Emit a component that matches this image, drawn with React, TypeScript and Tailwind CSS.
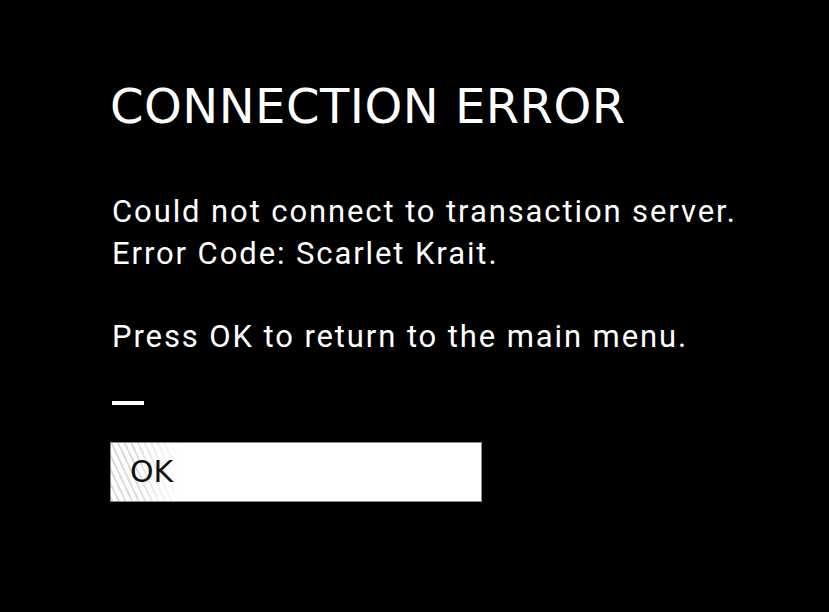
import React from 'react';

export default function App() {
  return (
    <div className="w-[829px] h-[612px] bg-black text-white overflow-hidden">
      <div className="pl-[110px] pt-[80px]">
        <h1 className="font-['DejaVu_Sans',sans-serif] text-[48px] leading-[52px] tracking-[0.5px] font-normal">
          CONNECTION ERROR
        </h1>

        <div className="mt-[59px] pl-[2px] font-['Roboto',sans-serif] text-[31px] leading-[41.5px] tracking-[1.9px]">
          <p>Could not connect to transaction server.</p>
          <p>Error Code: Scarlet Krait.</p>
          <p className="mt-[41.5px]">Press OK to return to the main menu.</p>
        </div>

        <div className="ml-[2px] mt-[44px] w-[32px] h-[4px] bg-white" />

        <button className="relative mt-[37px] w-[372px] h-[60px] bg-white border border-[#8a8a8a] flex items-center overflow-hidden">
          {/* faded diagonal stripes on the left */}
          <div className="absolute inset-y-0 left-0 w-[70px] bg-[repeating-linear-gradient(65deg,#dcdcdc_0px,#dcdcdc_2px,#ffffff_2px,#ffffff_6px)] [mask-image:linear-gradient(to_right,black_30%,transparent)]" />
          <span className="relative pl-[19px] font-['DejaVu_Sans',sans-serif] text-[30px] leading-none text-[#111]">OK</span>
        </button>
      </div>
    </div>
  );
}
